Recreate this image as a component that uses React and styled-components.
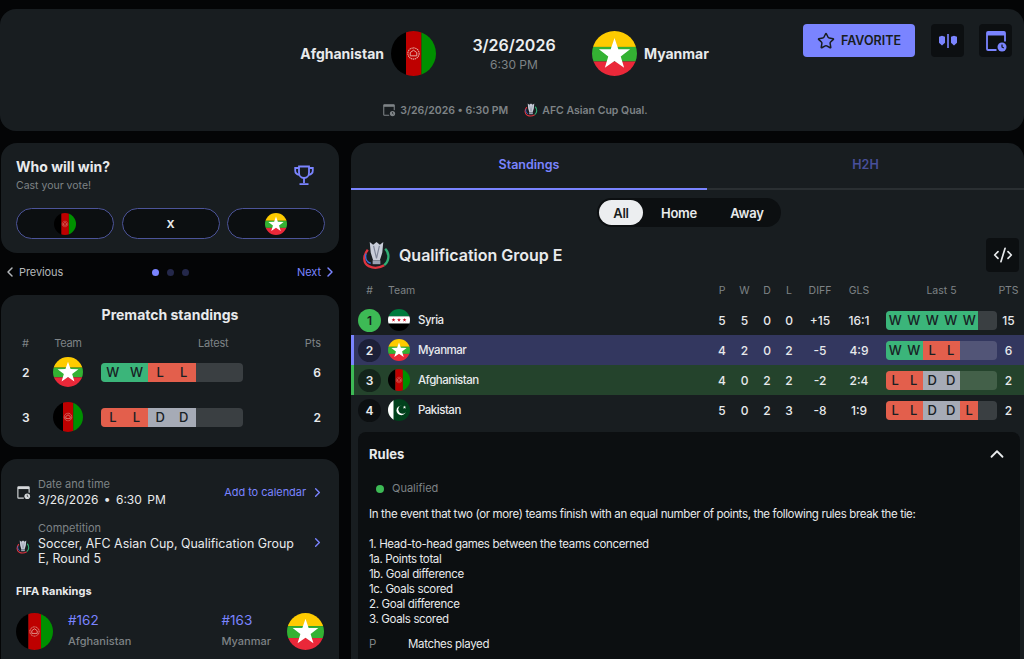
import React from "react";
import styled, { createGlobalStyle } from "styled-components";
import { Star, ChevronLeft, ChevronRight, ChevronUp, CodeXml } from "lucide-react";

const GlobalStyle = createGlobalStyle`
  html, body {
    margin: 0;
    padding: 0;
    height: 659px;
    overflow: hidden;
    background: #040506;
    color: #e8eaec;
    font-family: Inter, "Liberation Sans", sans-serif;
  }
  * { box-sizing: border-box; }
`;

const INDIGO = "#7a84ff";
const GREY = "#7e8386";

function starPoints(cx, cy, R, r) {
  const pts = [];
  for (let i = 0; i < 10; i++) {
    const rad = i % 2 ? r : R;
    const a = (Math.PI / 5) * i - Math.PI / 2;
    pts.push(`${(cx + rad * Math.cos(a)).toFixed(2)},${(cy + rad * Math.sin(a)).toFixed(2)}`);
  }
  return pts.join(" ");
}

const FlagSvg = styled.svg`
  display: block;
  flex: none;
  width: ${p => p.$size}px;
  height: ${p => p.$size}px;
  border-radius: 50%;
`;

const Flag = ({ team, size }) => (
  <FlagSvg $size={size} viewBox="0 0 48 48">
    {team === "afg" && (
      <>
        <rect width="16" height="48" fill="#000" />
        <rect x="16" width="16.500" height="48" fill="#be0000" />
        <rect x="32.500" width="15.500" height="48" fill="#009000" />
        <circle cx="24" cy="24" r="6" fill="none" stroke="#e6b3a8" strokeWidth="1.100" strokeDasharray="1.500 .6" />
        <path d="M20.500 26.500h7v-3.500l-3.500-2.500-3.500 2.500z" fill="none" stroke="#e6b3a8" strokeWidth="1" />
      </>
    )}
    {team === "mya" && (
      <>
        <rect width="48" height="17" fill="#fecb00" />
        <rect y="17" width="48" height="15.500" fill="#34b233" />
        <rect y="32.500" width="48" height="15.500" fill="#ea2839" />
        <polygon points={starPoints(24, 25, 17.500, 7)} fill="#fff" />
      </>
    )}
    {team === "syr" && (
      <>
        <rect width="48" height="16" fill="#007a3d" />
        <rect y="16" width="48" height="16" fill="#fff" />
        <rect y="32" width="48" height="16" fill="#000" />
        <polygon points={starPoints(12, 24, 4.500, 1.800)} fill="#ce1126" />
        <polygon points={starPoints(24, 24, 4.500, 1.800)} fill="#ce1126" />
        <polygon points={starPoints(36, 24, 4.500, 1.800)} fill="#ce1126" />
      </>
    )}
    {team === "pak" && (
      <>
        <rect width="48" height="48" fill="#01411c" />
        <rect width="12" height="48" fill="#fff" />
        <circle cx="29" cy="25" r="10.500" fill="#fff" />
        <circle cx="32" cy="22.500" r="9.500" fill="#01411c" />
        <polygon points={starPoints(36, 18, 4, 1.600)} fill="#fff" />
      </>
    )}
  </FlagSvg>
);

const CalendarClock = ({ size, color, hole = "#181d20" }) => (
  <svg width={size} height={size} viewBox="0 0 24 24" fill="none" style={{ display: "block", flex: "none" }}>
    <path d="M12.500 21H4a1 1 0 0 1-1-1V4a1 1 0 0 1 1-1h16a1 1 0 0 1 1 1v8.500" stroke={color} strokeWidth="1.800" />
    <rect x="3" y="3" width="18" height="3.500" fill={color} />
    <circle cx="18" cy="18" r="5.500" fill={hole} />
    <circle cx="18" cy="18" r="4.500" fill={color} />
    <path d="M18 15.500V18l1.800 1" stroke={hole} strokeWidth="1.200" />
  </svg>
);

const CompareIcon = () => (
  <svg width="20" height="20" viewBox="0 0 20 20" fill={INDIGO} style={{ display: "block" }}>
    <rect x="9.200" y="3" width="1.600" height="14" />
    <path d="M1 5.800 4 4.800l3 1v6l-3 2.700-3-2.700z" />
    <path d="M13 5.800l3-1 3 1v6l-3 2.700-3-2.700z" />
  </svg>
);

const CupLogo = ({ size }) => (
  <svg width={size} height={size} viewBox="0 0 30 30" style={{ display: "block", flex: "none" }}>
    <path d="M8 1l3.500 3L15 1l3.500 3L22 1l-1 11-2.500 8h-7L9 12z" fill="#c8cdd9" />
    <path d="M12 5l3 13M18 5l-3 13" stroke="#7f8698" strokeWidth="1.200" />
    <rect x="11" y="20" width="8" height="4" fill="#9aa1b2" />
    <path d="M6 9C1 15 1 23 7 26c5 2.500 11 2 16-1" fill="none" stroke="#e0343f" strokeWidth="2.400" />
    <path d="M24 8c5 5 4 13-1 17" fill="none" stroke="#2fae74" strokeWidth="2.400" />
    <path d="M4 13c-1 5 1 9 5 10" fill="none" stroke="#3a6fd8" strokeWidth="1.600" />
  </svg>
);

const TrophyIcon = () => (
  <svg width="20" height="21" viewBox="0 0 20 21" fill="none" stroke={INDIGO} strokeWidth="1.800" style={{ display: "block" }}>
    <path d="M5 1.500h10v6c0 3-2 5.500-5 5.500s-5-2.500-5-5.500z" />
    <path d="M5 3H1.200v2.500C1.200 8 3 9.500 5.400 9.800M15 3h3.800v2.500C18.800 8 17 9.500 14.600 9.800" />
    <path d="M10 13v5M5.500 19.200h9" />
  </svg>
);

const Page = styled.div`
  height: 659px;
  padding-top: 9px;
  overflow: hidden;
`;

const Panel = styled.section`
  background: #181d20;
  border-radius: 16px;
`;

const Header = styled(Panel)`
  position: relative;
  height: 122px;
  padding: 22px 0 0 4px;
`;

const Matchup = styled.div`
  display: grid;
  grid-template-columns: 1fr 156px 1fr;
  align-items: center;
  height: 45px;
`;

const Side = styled.div`
  display: flex;
  align-items: center;
  gap: 7px;
  justify-content: ${p => (p.$end ? "flex-end" : "flex-start")};
`;

const TeamTitle = styled.span`
  font-size: 14px;
  font-weight: 700;
  color: #e8eaec;
`;

const Kickoff = styled.div`
  text-align: center;
`;

const KickDate = styled.div`
  font-size: 16px;
  line-height: 20px;
  font-weight: 600;
  color: #eceef0;
`;

const KickTime = styled.div`
  margin-top: 3px;
  font-size: 12px;
  line-height: 14px;
  color: #7e8386;
`;

const MetaRow = styled.div`
  display: flex;
  justify-content: center;
  align-items: center;
  gap: 16px;
  margin-top: 27px;
  padding-left: 2px;
  font-size: 10.500px;
  font-weight: 600;
  color: ${GREY};
`;

const MetaItem = styled.span`
  display: flex;
  align-items: center;
  gap: 4px;
`;

const Actions = styled.div`
  position: absolute;
  top: 15px;
  right: 12px;
  display: flex;
  gap: 15px;
`;

const FavoriteButton = styled.button`
  display: flex;
  align-items: center;
  justify-content: center;
  gap: 6px;
  width: 112px;
  height: 33px;
  margin-right: 1px;
  border: 0;
  border-radius: 4px;
  background: ${INDIGO};
  color: #181d20;
  font: 600 12.500px Inter, sans-serif;
`;

const IconButton = styled.button`
  display: flex;
  align-items: center;
  justify-content: center;
  width: 33px;
  height: ${p => (p.$tall ? 34 : 33)}px;
  padding: 0;
  border: 0;
  border-radius: 4px;
  background: #0c0f11;
  color: #e8eaec;
`;

const Columns = styled.div`
  display: grid;
  grid-template-columns: 338px 673px;
  column-gap: 12px;
  padding-left: 1px;
  margin-top: 12px;
`;

const Sidebar = styled.div`
  display: flex;
  flex-direction: column;
`;

const VoteCard = styled(Panel)`
  height: 110px;
  padding: 15px 15px 0;
`;

const VoteTop = styled.div`
  display: flex;
  justify-content: space-between;
  padding-right: 10px;
`;

const VoteTitle = styled.div`
  font-size: 14px;
  line-height: 18px;
  font-weight: 700;
`;

const VoteSub = styled.div`
  margin-top: 1px;
  font-size: 10.500px;
  line-height: 18px;
  color: ${GREY};
`;

const TrophyWrap = styled.div`
  padding-top: 7px;
`;

const VoteButtons = styled.div`
  display: grid;
  grid-template-columns: repeat(3, 98px);
  gap: 7.500px;
  margin-top: 13px;
`;

const VoteButton = styled.button`
  display: flex;
  align-items: center;
  justify-content: center;
  height: 31px;
  padding: 0;
  border: 1px solid #4c5499;
  border-radius: 16px;
  background: #0c0f11;
  color: #e8eaec;
  font: 700 11px Inter, sans-serif;
`;

const Pager = styled.div`
  display: flex;
  align-items: center;
  justify-content: space-between;
  height: 20px;
  margin: 9px 0 13px;
  padding: 0 1px;
  font-size: 11px;
  letter-spacing: -0.1px;
`;

const PagerLink = styled.span`
  display: flex;
  align-items: center;
  gap: 1px;
  color: ${p => (p.$active ? INDIGO : "#b4b8bb")};
`;

const Dots = styled.div`
  display: flex;
  gap: 8px;
  margin-right: 20px;
`;

const Dot = styled.i`
  width: 7px;
  height: 7px;
  border-radius: 50%;
  background: ${p => (p.$on ? INDIGO : "#24284a")};
`;

const PrematchCard = styled(Panel)`
  height: 152px;
  padding-top: 11px;
  margin-bottom: 12px;
`;

const CardTitle = styled.h3`
  margin: 0 0 11px;
  text-align: center;
  font-size: 14px;
  line-height: 18px;
  font-weight: 700;
`;

const PreGrid = styled.div`
  display: grid;
  grid-template-columns: 48px 30px 18px 142px 1fr;
  align-items: center;
  padding: 0 18px 0 4px;
  height: ${p => (p.$head ? "16px" : "30px")};
  margin-bottom: ${p => (p.$head ? "6px" : "15px")};
  font-size: ${p => (p.$head ? "11px" : "12px")};
  font-weight: ${p => (p.$head ? 400 : 600)};
  color: ${p => (p.$head ? GREY : "#e8eaec")};
`;

const Pos = styled.span`
  padding-left: 17px;
`;

const HeadTeam = styled.span`
  display: flex;
  justify-content: center;
  letter-spacing: -0.3px;
`;

const HeadLatest = styled.span`
  grid-column: 4;
  padding-left: 97px;
  letter-spacing: -0.2px;
`;

const Pts = styled.span`
  grid-column: 5;
  text-align: right;
`;

const FormBar = styled.div`
  display: flex;
  width: ${p => p.$width}px;
  height: 19px;
  border-radius: 4px;
  overflow: hidden;
  background: ${p => p.$track || "#3a3f42"};
`;

const FORM_BG = { W: "#3bb57a", L: "#e35f4c", D: "#a6abb6" };

const FormCell = styled.span`
  width: calc(100% / 6);
  display: flex;
  align-items: center;
  justify-content: center;
  font-size: 13px;
  font-weight: 500;
  color: #182024;
  background: ${p => FORM_BG[p.$r]};
`;

const Form = ({ results, width, track }) => (
  <FormBar $width={width} $track={track}>
    {results.split("").map((r, i) => (
      <FormCell key={i} $r={r}>{r}</FormCell>
    ))}
  </FormBar>
);

const DetailsCard = styled(Panel)`
  height: 240px;
  padding: 18px 15px 0;
`;

const DetailRow = styled.div`
  display: grid;
  grid-template-columns: 22px 1fr auto;
  align-items: ${p => (p.$top ? "start" : "center")};
`;

const DetailIcon = styled.div`
  padding-top: ${p => p.$pad || 0}px;
`;

const DetailLabel = styled.div`
  font-size: 11px;
  line-height: 15px;
  color: ${GREY};
`;

const DetailValue = styled.div`
  font-size: ${p => (p.$spaced ? "12px" : "12.400px")};
  line-height: 15px;
  color: #e8eaec;
  word-spacing: ${p => (p.$spaced ? "2px" : "0")};
`;

const CalendarLink = styled.span`
  display: flex;
  align-items: center;
  gap: 4px;
  margin-right: -1px;
  font-size: 11px;
  letter-spacing: -0.05px;
  color: ${INDIGO};
`;

const CompetitionBlock = styled.div`
  margin-top: 14px;
`;

const ChevronCell = styled.div`
  color: ${INDIGO};
  padding-top: 13px;
  margin-right: -1px;
`;

const RankingsTitle = styled.div`
  margin-top: 18px;
  font-size: 11px;
  line-height: 15px;
  font-weight: 700;
`;

const Rankings = styled.div`
  display: flex;
  justify-content: space-between;
  margin-top: 14px;
`;

const RankTeam = styled.div`
  display: flex;
  align-items: flex-start;
  gap: ${p => (p.$right ? "16px" : "15px")};
`;

const RankNumber = styled.div`
  font-size: 13.500px;
  line-height: 15px;
  color: ${INDIGO};
`;

const RankName = styled.div`
  margin-top: 6px;
  font-size: 11px;
  line-height: 15px;
  font-weight: 500;
  color: ${GREY};
`;

const MainPanel = styled(Panel)`
  height: 520px;
  border-radius: 16px 16px 0 0;
`;

const Tabs = styled.div`
  display: grid;
  grid-template-columns: 356px 317px;
  height: 47px;
`;

const Tab = styled.div`
  display: flex;
  align-items: center;
  justify-content: center;
  font-size: 12.500px;
  font-weight: 600;
  padding-bottom: 3px;
  color: ${p => (p.$active ? INDIGO : "#484f9a")};
  border-bottom: 2px solid ${p => (p.$active ? INDIGO : "#2a2f32")};
`;

const PillsRow = styled.div`
  display: flex;
  justify-content: center;
  padding: 8px 0 0 3px;
`;

const Pills = styled.div`
  display: flex;
  align-items: center;
  height: 29px;
  padding: 2px;
  border-radius: 15px;
  background: #0c0f11;
`;

const Pill = styled.span`
  display: flex;
  align-items: center;
  justify-content: center;
  width: ${p => p.$w}px;
  height: 25px;
  border-radius: 13px;
  font-size: 13px;
  font-weight: 600;
  letter-spacing: -0.2px;
  background: ${p => (p.$active ? "#eceef0" : "transparent")};
  color: ${p => (p.$active ? "#181d20" : "#e8eaec")};
`;

const GroupHead = styled.div`
  display: flex;
  align-items: center;
  justify-content: space-between;
  height: 34px;
  margin-top: 11px;
  padding: 0 5px 0 11px;
`;

const GroupName = styled.div`
  display: flex;
  align-items: center;
  gap: 8px;
  font-size: 16px;
  font-weight: 600;
`;

const TableRow = styled.div`
  display: grid;
  grid-template-columns: 37px 323px 22px 23px 22px 22px 40px 38px 8px 111px 23px 4px;
  align-items: center;
  height: ${p => (p.$head ? "20px" : "30px")};
  font-size: ${p => (p.$head ? "10.500px" : "12px")};
  font-weight: ${p => (p.$head ? 400 : 500)};
  color: ${p => (p.$head ? GREY : "#e8eaec")};
  background: ${p => p.$bg || "transparent"};
  box-shadow: ${p => (p.$accent ? `inset 3px 0 0 ${p.$accent}` : "none")};
  margin-top: ${p => (p.$head ? "8px" : "0")};
  margin-bottom: ${p => (p.$head ? "5px" : "0")};
`;

const Num = styled.span`
  text-align: center;
  grid-column: ${p => p.$col || "auto"};
`;

const RankCell = styled.span`
  display: flex;
  justify-content: ${p => (p.$head ? "center" : "flex-start")};
  padding-left: ${p => (p.$head ? "0" : "7px")};
`;

const RankBadge = styled.span`
  display: flex;
  align-items: center;
  justify-content: center;
  width: 23px;
  height: 23px;
  border-radius: 50%;
  font-size: 12px;
  font-weight: 600;
  background: ${p => p.$bg};
  color: ${p => p.$fg};
`;

const TeamCell = styled.span`
  display: flex;
  align-items: center;
  gap: 8px;
  font-size: 11.500px;
  letter-spacing: -0.5px;
`;

const FormCol = styled.div`
  grid-column: ${p => p.$col};
`;

const RulesCard = styled.div`
  margin: 7px 4px 0 7px;
  padding: 11px 11px 0 11px;
  height: 240px;
  border-radius: 8px;
  background: #0c0f11;
  font-size: 11.500px;
  line-height: 15px;
  letter-spacing: -0.35px;
`;

const RulesHead = styled.div`
  display: flex;
  align-items: center;
  justify-content: space-between;
  font-size: 13px;
  line-height: 22px;
  font-weight: 700;
  letter-spacing: 0;
  padding-right: 1px;
`;

const LegendRow = styled.div`
  display: flex;
  align-items: center;
  gap: 8px;
  margin-top: 16px;
  padding-left: 7px;
  font-size: 11px;
  letter-spacing: 0;
  color: ${GREY};
`;

const LegendDot = styled.i`
  width: 8px;
  height: 8px;
  border-radius: 50%;
  background: #3dba55;
`;

const RulesText = styled.p`
  margin: ${p => p.$gap}px 0 0;
  white-space: pre-line;
`;

const Abbrev = styled.div`
  display: grid;
  grid-template-columns: 39px 1fr;
  margin-top: 10px;
`;

const AbbrevKey = styled.span`
  color: ${GREY};
`;

const STANDINGS = [
  { rank: 1, team: "syr", name: "Syria", p: 5, w: 5, d: 0, l: 0, diff: "+15", gls: "16:1", form: "WWWWW", pts: 15, badge: "#3dba55", fg: "#181d20" },
  { rank: 2, team: "mya", name: "Myanmar", p: 4, w: 2, d: 0, l: 2, diff: "-5", gls: "4:9", form: "WWLL", pts: 6, bg: "#33375f", accent: INDIGO, badge: "#1c1f38", track: "#525577" },
  { rank: 3, team: "afg", name: "Afghanistan", p: 4, w: 0, d: 2, l: 2, diff: "-2", gls: "2:4", form: "LLDD", pts: 2, bg: "#24432c", accent: "#3dba55", badge: "#13241a", track: "#436049" },
  { rank: 4, team: "pak", name: "Pakistan", p: 5, w: 0, d: 2, l: 3, diff: "-8", gls: "1:9", form: "LLDDL", pts: 2, badge: "#0c0f11" },
];

const App = () => (
  <Page>
    <GlobalStyle />
    <Header>
      <Matchup>
        <Side $end>
          <TeamTitle>Afghanistan</TeamTitle>
          <Flag team="afg" size={45} />
        </Side>
        <Kickoff>
          <KickDate>3/26/2026</KickDate>
          <KickTime>6:30 PM</KickTime>
        </Kickoff>
        <Side>
          <Flag team="mya" size={45} />
          <TeamTitle>Myanmar</TeamTitle>
        </Side>
      </Matchup>
      <MetaRow>
        <MetaItem>
          <CalendarClock size={14} color={GREY} />
          3/26/2026 • 6:30 PM
        </MetaItem>
        <MetaItem>
          <CupLogo size={14} />
          AFC Asian Cup Qual.
        </MetaItem>
      </MetaRow>
      <Actions>
        <FavoriteButton>
          <Star size={18} strokeWidth={2} />
          FAVORITE
        </FavoriteButton>
        <IconButton><CompareIcon /></IconButton>
        <IconButton><CalendarClock size={24} color={INDIGO} hole="#0c0f11" /></IconButton>
      </Actions>
    </Header>

    <Columns>
      <Sidebar>
        <VoteCard>
          <VoteTop>
            <div>
              <VoteTitle>Who will win?</VoteTitle>
              <VoteSub>Cast your vote!</VoteSub>
            </div>
            <TrophyWrap><TrophyIcon /></TrophyWrap>
          </VoteTop>
          <VoteButtons>
            <VoteButton><Flag team="afg" size={22} /></VoteButton>
            <VoteButton>X</VoteButton>
            <VoteButton><Flag team="mya" size={22} /></VoteButton>
          </VoteButtons>
        </VoteCard>

        <Pager>
          <PagerLink><ChevronLeft size={16} strokeWidth={2.200} />Previous</PagerLink>
          <Dots>
            <Dot $on />
            <Dot />
            <Dot />
          </Dots>
          <PagerLink $active>Next<ChevronRight size={16} strokeWidth={2.200} /></PagerLink>
        </Pager>

        <PrematchCard>
          <CardTitle>Prematch standings</CardTitle>
          <PreGrid $head>
            <Pos>#</Pos>
            <HeadTeam>Team</HeadTeam>
            <HeadLatest>Latest</HeadLatest>
            <Pts>Pts</Pts>
          </PreGrid>
          <PreGrid>
            <Pos>2</Pos>
            <Flag team="mya" size={30} />
            <FormCol $col={4}><Form results="WWLL" width={142} /></FormCol>
            <Pts>6</Pts>
          </PreGrid>
          <PreGrid>
            <Pos>3</Pos>
            <Flag team="afg" size={30} />
            <FormCol $col={4}><Form results="LLDD" width={142} /></FormCol>
            <Pts>2</Pts>
          </PreGrid>
        </PrematchCard>

        <DetailsCard>
          <DetailRow>
            <DetailIcon><CalendarClock size={15} color="#d5d8da" /></DetailIcon>
            <div>
              <DetailLabel>Date and time</DetailLabel>
              <DetailValue $spaced>3/26/2026 • 6:30 PM</DetailValue>
            </div>
            <CalendarLink>Add to calendar<ChevronRight size={15} strokeWidth={2.200} /></CalendarLink>
          </DetailRow>
          <CompetitionBlock>
            <DetailRow $top>
              <DetailIcon $pad={19}><CupLogo size={14} /></DetailIcon>
              <div>
                <DetailLabel>Competition</DetailLabel>
                <DetailValue>Soccer, AFC Asian Cup, Qualification Group<br />E, Round 5</DetailValue>
              </div>
              <ChevronCell><ChevronRight size={15} strokeWidth={2.200} /></ChevronCell>
            </DetailRow>
          </CompetitionBlock>
          <RankingsTitle>FIFA Rankings</RankingsTitle>
          <Rankings>
            <RankTeam>
              <Flag team="afg" size={37} />
              <div>
                <RankNumber>#162</RankNumber>
                <RankName>Afghanistan</RankName>
              </div>
            </RankTeam>
            <RankTeam $right>
              <div>
                <RankNumber>#163</RankNumber>
                <RankName>Myanmar</RankName>
              </div>
              <Flag team="mya" size={37} />
            </RankTeam>
          </Rankings>
        </DetailsCard>
      </Sidebar>

      <MainPanel>
        <Tabs>
          <Tab $active>Standings</Tab>
          <Tab>H2H</Tab>
        </Tabs>
        <PillsRow>
          <Pills>
            <Pill $active $w={44}>All</Pill>
            <Pill $w={72}>Home</Pill>
            <Pill $w={64}>Away</Pill>
          </Pills>
        </PillsRow>
        <GroupHead>
          <GroupName>
            <CupLogo size={29} />
            Qualification Group E
          </GroupName>
          <IconButton $tall><CodeXml size={20} /></IconButton>
        </GroupHead>
        <TableRow $head>
          <RankCell $head>#</RankCell>
          <span>Team</span>
          <Num>P</Num>
          <Num>W</Num>
          <Num>D</Num>
          <Num>L</Num>
          <Num>DIFF</Num>
          <Num>GLS</Num>
          <Num $col={10}>Last 5</Num>
          <Num>PTS</Num>
        </TableRow>
        {STANDINGS.map(s => (
          <TableRow key={s.rank} $bg={s.bg} $accent={s.accent}>
            <RankCell>
              <RankBadge $bg={s.badge} $fg={s.fg || "#e8eaec"}>{s.rank}</RankBadge>
            </RankCell>
            <TeamCell>
              <Flag team={s.team} size={22} />
              {s.name}
            </TeamCell>
            <Num>{s.p}</Num>
            <Num>{s.w}</Num>
            <Num>{s.d}</Num>
            <Num>{s.l}</Num>
            <Num>{s.diff}</Num>
            <Num>{s.gls}</Num>
            <FormCol $col={10}><Form results={s.form} width={111} track={s.track} /></FormCol>
            <Num>{s.pts}</Num>
          </TableRow>
        ))}
        <RulesCard>
          <RulesHead>
            Rules
            <ChevronUp size={22} />
          </RulesHead>
          <LegendRow><LegendDot />Qualified</LegendRow>
          <RulesText $gap={11}>In the event that two (or more) teams finish with an equal number of points, the following rules break the tie:</RulesText>
          <RulesText $gap={15}>{`1. Head-to-head games between the teams concerned
1a. Points total
1b. Goal difference
1c. Goals scored
2. Goal difference
3. Goals scored`}</RulesText>
          <Abbrev>
            <AbbrevKey>P</AbbrevKey>
            <span>Matches played</span>
          </Abbrev>
        </RulesCard>
      </MainPanel>
    </Columns>
  </Page>
);

export default App;
